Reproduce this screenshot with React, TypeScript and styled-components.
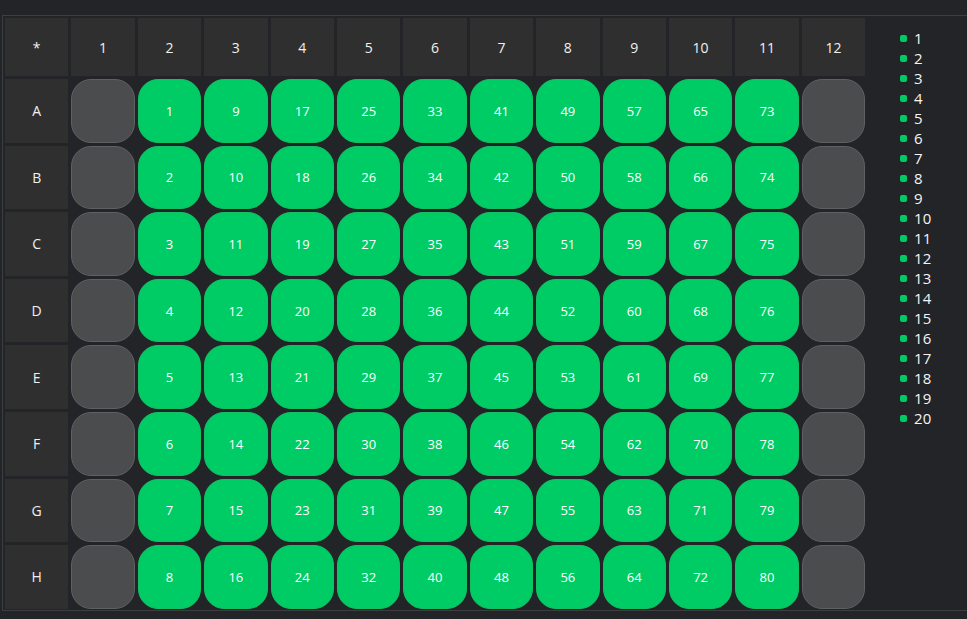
import React from "react";
import styled, { createGlobalStyle } from "styled-components";

const GlobalStyle = createGlobalStyle`
  html, body {
    margin: 0;
    padding: 0;
    background: #222428;
    font-family: "Open Sans", "Noto Sans", sans-serif;
    color: #f2f2f2;
  }
`;

const ROWS = ["A", "B", "C", "D", "E", "F", "G", "H"];
const COLS = [1, 2, 3, 4, 5, 6, 7, 8, 9, 10, 11, 12];

const Page = styled.div`
  padding: 15px 0 0 2px;
`;

const Panel = styled.div`
  display: flex;
  align-items: flex-start;
  border: 1px solid #3c3e42;
  border-right: none;
  padding: 2px;
  height: 596px;
  box-sizing: border-box;
`;

const Plate = styled.div`
  display: grid;
  grid-template-columns: repeat(13, 63.4px);
  grid-template-rows: 58px repeat(8, 63.6px);
  gap: 3px;
`;

const Header = styled.div`
  background: #2f2f2f;
  display: flex;
  align-items: center;
  justify-content: center;
  font-size: 14px;
  font-weight: 500;
  color: #f0f0f0;
`;

const Well = styled.div<{ $active: boolean }>`
  box-sizing: border-box;
  border-radius: 20px;
  display: flex;
  align-items: center;
  justify-content: center;
  font-size: 13px;
  color: #ffffff;
  background: ${(p) => (p.$active ? "#00cc66" : "#4b4c4e")};
  border: 1px solid ${(p) => (p.$active ? "#14c064" : "#5f6062")};
`;

const Legend = styled.ul`
  list-style: none;
  margin: 0;
  padding: 10px 0 0 35px;
`;

const LegendItem = styled.li`
  display: flex;
  align-items: center;
  gap: 7px;
  height: 20px;
  font-size: 15px;
  color: #f4f4f4;
`;

const Dot = styled.span`
  width: 7px;
  height: 7px;
  border-radius: 2px;
  background: #00cc66;
`;

export default function App() {
  return (
    <Page>
      <GlobalStyle />
      <Panel>
        <Plate>
          <Header>*</Header>
          {COLS.map((c) => (
            <Header key={"h" + c}>{c}</Header>
          ))}
          {ROWS.map((r, ri) => (
            <React.Fragment key={r}>
              <Header>{r}</Header>
              {COLS.map((c) => {
                const active = c > 1 && c < 12;
                return (
                  <Well key={r + c} $active={active}>
                    {active ? (c - 2) * 8 + ri + 1 : ""}
                  </Well>
                );
              })}
            </React.Fragment>
          ))}
        </Plate>
        <Legend>
          {Array.from({ length: 20 }, (_, i) => (
            <LegendItem key={i}>
              <Dot />
              {i + 1}
            </LegendItem>
          ))}
        </Legend>
      </Panel>
    </Page>
  );
}
